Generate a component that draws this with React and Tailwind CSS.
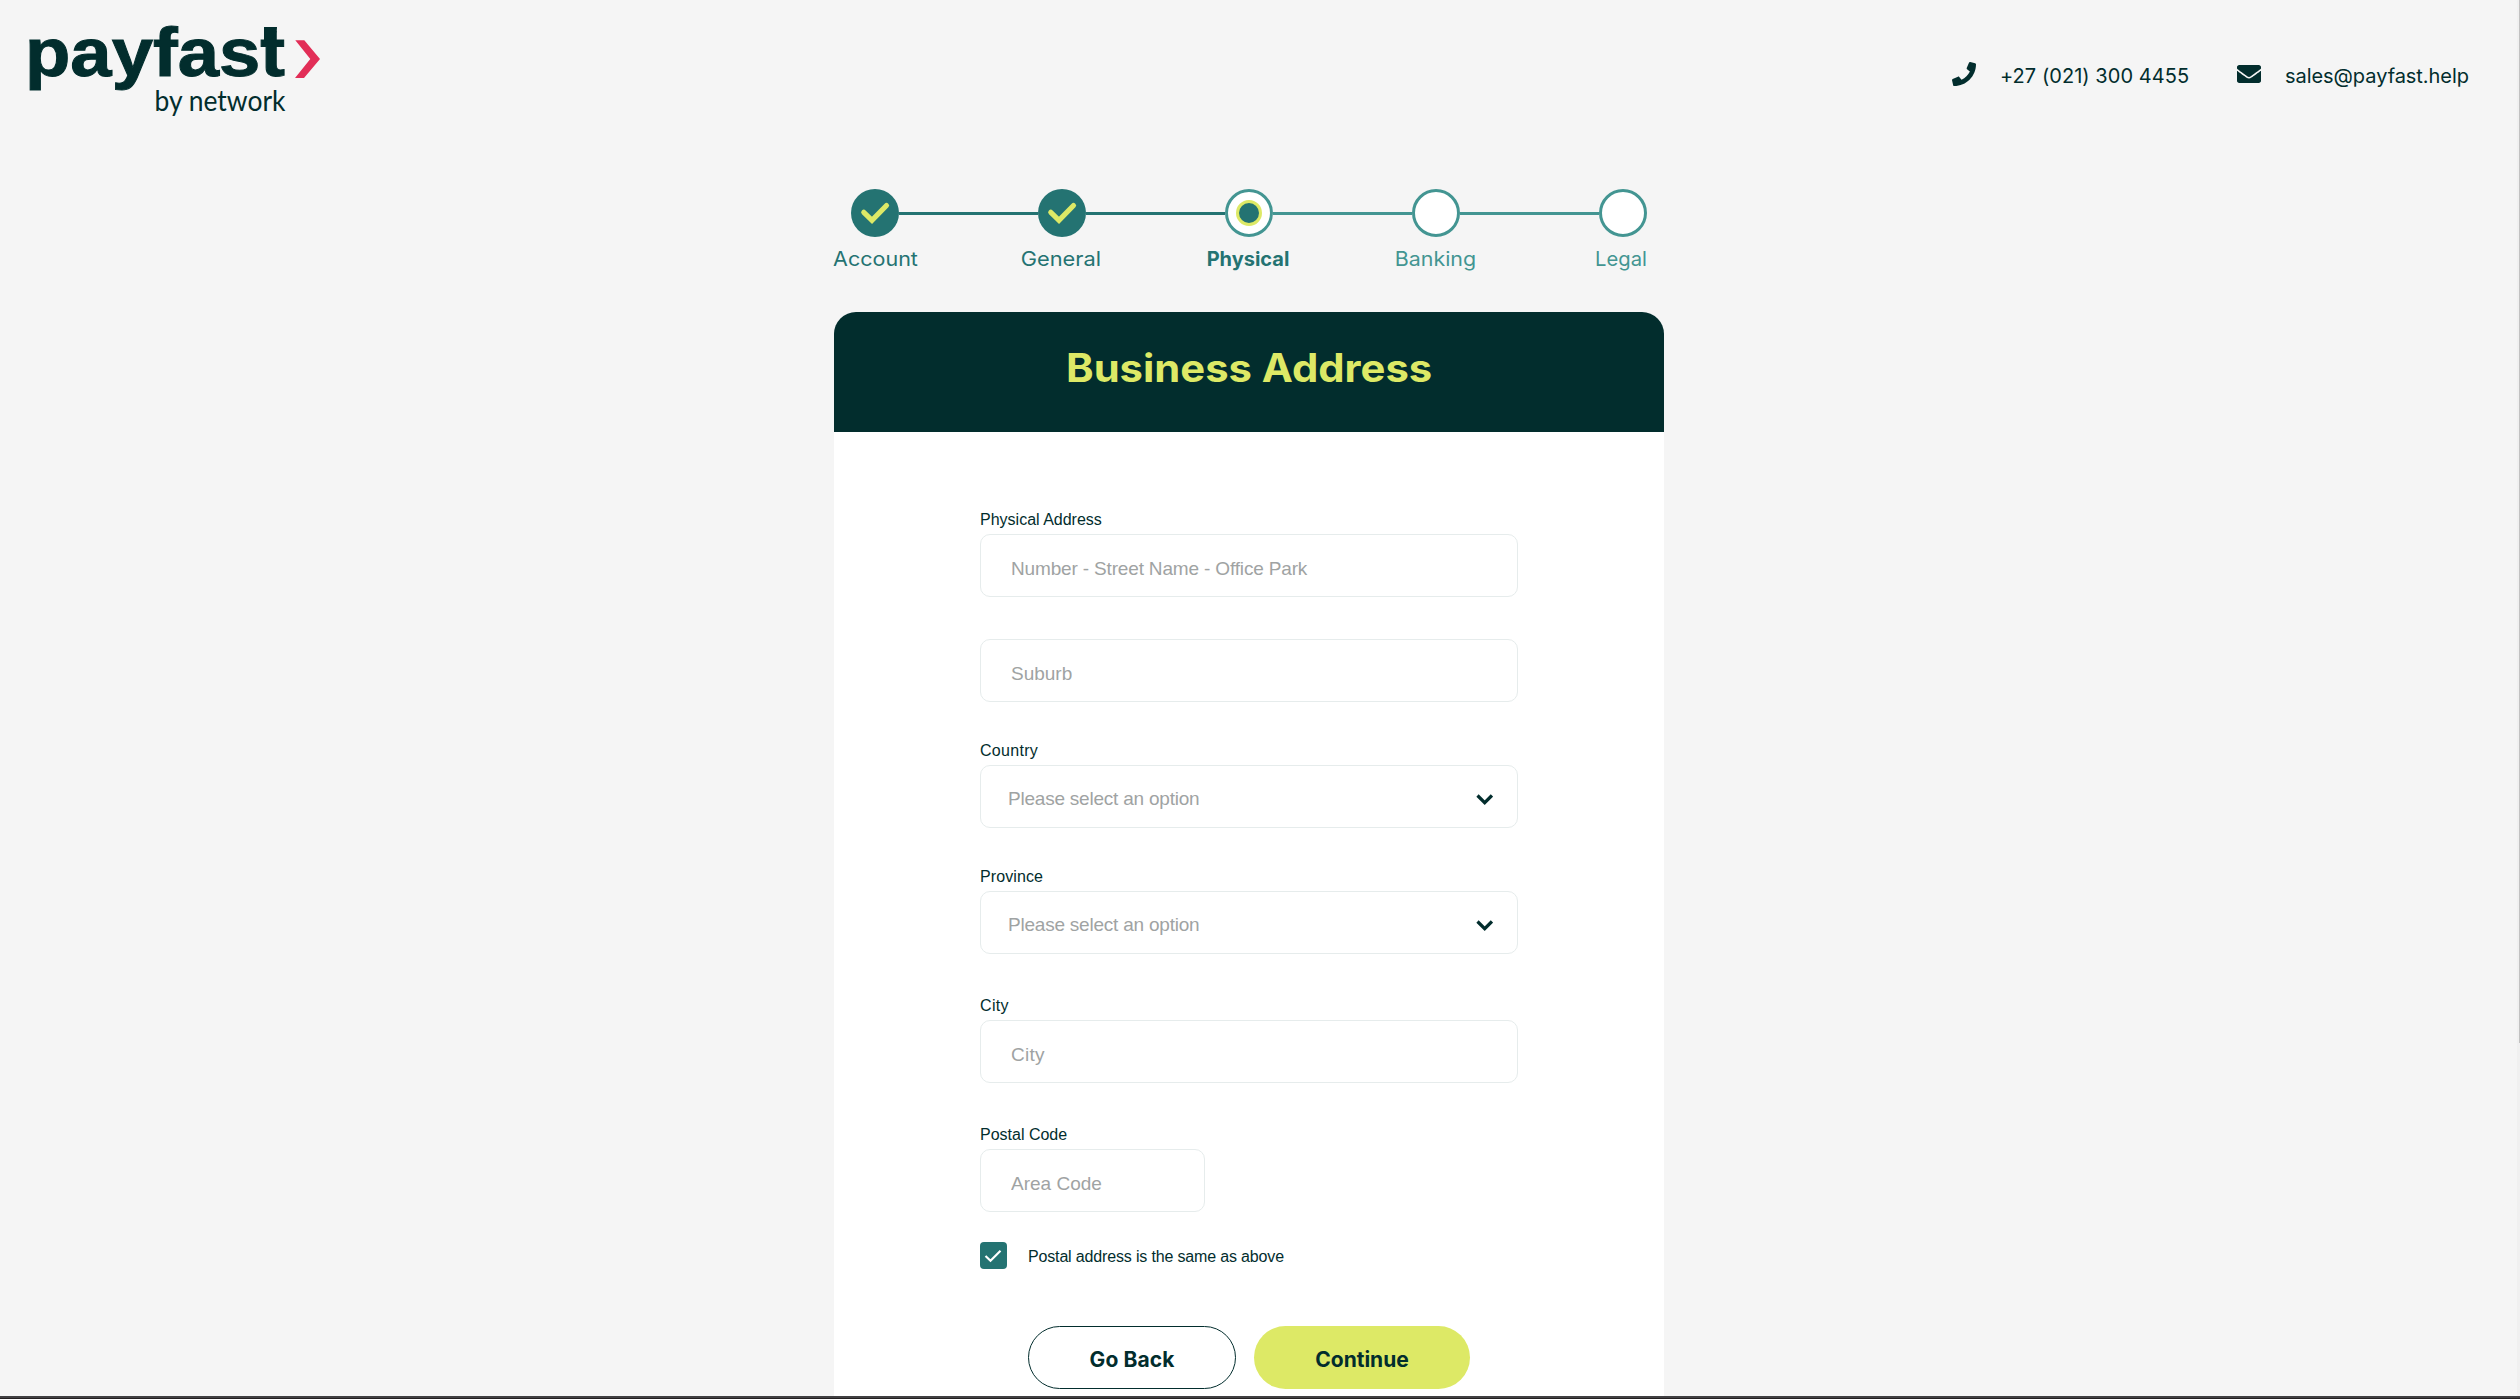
import React from 'react';
import { FaPhone, FaEnvelope } from 'react-icons/fa';

const steps = [
  { name: 'Account', state: 'done', text: 'text-[#247372] scale-x-[1.075]' },
  { name: 'General', state: 'done', text: 'text-[#247372] scale-x-[1.09] pr-[3px]' },
  { name: 'Physical', state: 'current', text: 'text-[#247372] font-bold pr-0.5' },
  { name: 'Banking', state: 'todo', text: 'text-[#439592] scale-x-[1.07] pr-0.5' },
  { name: 'Legal', state: 'todo', text: 'text-[#439592] scale-x-[1.01] pr-[5px]' },
];

function Logo() {
  return (
    <svg width="340" height="148" viewBox="0 0 340 148" className="shrink-0" role="img" aria-label="payfast by network">
      <text x="25" y="76" fontSize="69" fontWeight="700" textLength="260" lengthAdjust="spacingAndGlyphs" fill="#022D2D" stroke="#022D2D" strokeWidth="1" className="font-['Liberation_Sans',Arial,sans-serif]">
        payfast
      </text>
      <path d="M264 27h13c0 7-3 11-8 13h-5z" fill="#022D2D" />
      <text x="154.500" y="110.500" fontSize="28" textLength="131" lengthAdjust="spacingAndGlyphs" fill="#022D2D" className="font-['Lato',sans-serif]">
        by network
      </text>
      <path d="M295.300 40.300h9L320 59l-16 19h-9l15.300-19z" fill="#E22E57" />
    </svg>
  );
}

function StepMark({ state }) {
  if (state === 'done') {
    return (
      <div className="size-12 shrink-0 rounded-full bg-[#247372]">
        <svg viewBox="0 0 48 48" className="size-12" fill="none" stroke="#DDE966" strokeWidth="5.200">
          <path d="M12.800 23.300 21 31.300 35.500 16.500" strokeLinecap="round" />
        </svg>
      </div>
    );
  }
  return (
    <div className="flex size-12 shrink-0 items-center justify-center rounded-full border-[3px] border-[#439592] bg-white">
      {state === 'current' && <div className="size-[26px] rounded-full border-[3px] border-[#DDE966] bg-[#247372]" />}
    </div>
  );
}

function Stepper() {
  return (
    <nav className="flex flex-col items-center pt-[41px]">
      <div className="flex items-center">
        {steps.map((s, i) => (
          <React.Fragment key={s.name}>
            {i > 0 && <div className={i < 3 ? 'mt-px h-[3px] w-[139px] bg-[#247372]' : 'mt-px h-[3px] w-[139px] bg-[#439592]'} />}
            <StepMark state={s.state} />
          </React.Fragment>
        ))}
      </div>
      <div className="mt-[10px] flex text-center text-xl leading-6">
        {steps.map((s) => (
          <span key={s.name} className={`w-[187px] ${s.text}`}>{s.name}</span>
        ))}
      </div>
    </nav>
  );
}

function Label({ children, tracking = '' }) {
  return <label className={`mb-1 block h-5 text-base leading-5 text-[#022D2D] ${tracking}`}>{children}</label>;
}

function TextField({ label, labelTracking, placeholder, width = 'w-full', tracking = '' }) {
  return (
    <div>
      {label && <Label tracking={labelTracking}>{label}</Label>}
      <input
        placeholder={placeholder}
        className={`block h-[63px] rounded-[10px] border border-[#E6ECEC] bg-white pt-1.5 pl-[30px] text-[19px] outline-none placeholder:text-[#9FA3A3] ${width} ${tracking}`}
      />
    </div>
  );
}

function SelectField({ label, tracking }) {
  return (
    <div>
      <Label tracking={tracking}>{label}</Label>
      <button type="button" className="flex h-[63px] w-full items-center justify-between rounded-[10px] border border-[#E6ECEC] bg-white pr-6 pl-[27px]">
        <span className="pt-[5px] text-[19px] tracking-[-0.22px] text-[#9FA3A3]">Please select an option</span>
        <svg width="17" height="12" viewBox="0 0 17 12" className="mt-1.5" fill="none" stroke="#022D2D" strokeWidth="3.200">
          <path d="M1.500 1.500 8.700 8.700 15.900 1.500" />
        </svg>
      </button>
    </div>
  );
}

export default function App() {
  return (
    <div className="flex h-[1399px] flex-col overflow-hidden bg-[#F5F5F5] font-['Inter',sans-serif] text-[#022D2D]">
      <div className="flex min-h-0 flex-1">
        <div className="min-w-0 flex-1 overflow-hidden">
          <header className="flex h-[148px] items-center justify-between pr-12">
            <Logo />
            <div className="flex items-center gap-12 text-xl leading-6">
              <div className="flex items-center gap-6">
                <FaPhone size={24} />
                <span className="w-[189px] pt-1 tracking-[0.05px] whitespace-nowrap">+27 (021) 300 4455</span>
              </div>
              <div className="flex items-center gap-6">
                <FaEnvelope size={24} />
                <span className="w-[184px] pt-1 tracking-[-0.05px] whitespace-nowrap">sales@payfast.help</span>
              </div>
            </div>
          </header>

          <main className="flex w-[2498px] flex-col items-center">
            <Stepper />
            <section className="mt-[41px] w-[830px] overflow-hidden rounded-t-[22px] bg-white">
              <div className="flex h-[120px] items-center justify-center bg-[#022D2D] pb-2">
                <h1 className="scale-x-[1.07] text-[39px] font-bold text-[#DDE966]">Business Address</h1>
              </div>
              <form className="mx-auto w-[538px] pt-[78px] font-['Liberation_Sans',Arial,sans-serif]">
                <div className="flex flex-col gap-[42px]">
                  <TextField label="Physical Address" placeholder="Number - Street Name - Office Park" tracking="tracking-[-0.16px]" />
                  <TextField placeholder="Suburb" />
                </div>
                <div className="mt-[39px] flex flex-col gap-[39px]">
                  <SelectField label="Country" tracking="tracking-[0.3px]" />
                  <SelectField label="Province" tracking="tracking-[0.1px]" />
                </div>
                <div className="mt-[42px] flex flex-col gap-[42px]">
                  <TextField label="City" labelTracking="tracking-[0.35px]" placeholder="City" tracking="tracking-[0.3px]" />
                  <TextField label="Postal Code" placeholder="Area Code" width="w-[225px]" />
                </div>
                <div className="mt-[30px] flex items-center gap-[21px]">
                  <div className="size-[27px] rounded bg-[#247372]">
                    <svg viewBox="0 0 27 27" className="size-[27px]" fill="none" stroke="#fff" strokeWidth="2.200">
                      <path d="M5.500 14 10.500 18.700 20.500 8.800" />
                    </svg>
                  </div>
                  <span className="pt-0.5 text-base tracking-[-0.16px]">Postal address is the same as above</span>
                </div>
                <div className="mt-[57px] flex items-center justify-center gap-[18px] pb-16 font-['Inter',sans-serif] text-[21px] font-bold">
                  <button type="button" className="h-[63px] w-[208px] rounded-full border border-[#022D2D] bg-white pt-1 tracking-[0.1px]">Go Back</button>
                  <button type="button" className="h-[63px] w-[216px] rounded-full bg-[#DDE966] pt-1">Continue</button>
                </div>
              </form>
            </section>
          </main>
        </div>
        <div className="flex w-[3px] shrink-0 justify-end bg-[#F0F0F0]">
          <div className="h-[1043px] w-px bg-[#C1C1C1]" />
        </div>
      </div>
      <div className="h-[3px] shrink-0 border-b border-[#231F20] bg-[#414042]" />
    </div>
  );
}
